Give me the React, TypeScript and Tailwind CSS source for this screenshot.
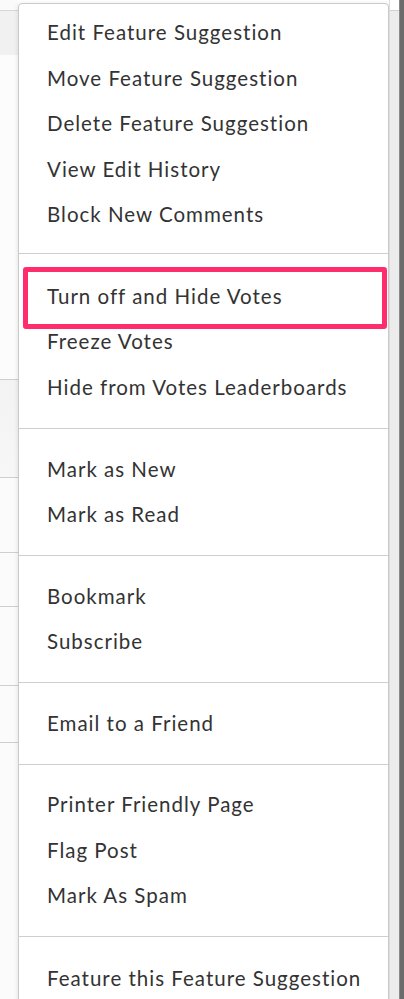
import React from "react";

const groups: string[][] = [
  ["Edit Feature Suggestion", "Move Feature Suggestion", "Delete Feature Suggestion", "View Edit History", "Block New Comments"],
  ["Turn off and Hide Votes", "Freeze Votes", "Hide from Votes Leaderboards"],
  ["Mark as New", "Mark as Read"],
  ["Bookmark", "Subscribe"],
  ["Email to a Friend"],
  ["Printer Friendly Page", "Flag Post", "Mark As Spam"],
  ["Feature this Feature Suggestion"],
];

const groupClass = (gi: number) => {
  if (gi === 0) return "pt-[5.5px] pb-[16px]";
  if (gi === 1) return "border-t border-[#cfcfcf] pt-[19px] pb-[18.5px]";
  if (gi === 6) return "border-t border-[#cfcfcf] pt-[18.5px] pb-[18.5px]";
  return "border-t border-[#cfcfcf] pt-[17px] pb-[18px]";
};

export default function App() {
  return (
    <div className="flex h-[999px] w-[404px] overflow-hidden bg-white" style={{ fontFamily: "Lato, 'Open Sans', sans-serif" }}>
      {/* left background strip */}
      <div className="flex w-[18px] shrink-0 flex-col">
        <div className="h-[10px] bg-[#fafafa]" />
        <div className="h-[45px] border-t border-[#d6d6d6] bg-[#f1f1f1]" />
        <div className="h-[324px] bg-[#fcfcfc]" />
        <div className="h-[98px] border-t border-[#cfcfcf] bg-gradient-to-b from-[#f3f3f3] to-[#f7f7f7]" />
        <div className="h-[75px] border-t border-[#cfcfcf] bg-[#fbfbfb]" />
        <div className="h-[54px] border-t border-[#cfcfcf] bg-[#fbfbfb]" />
        <div className="h-[79px] border-t border-[#cfcfcf] bg-[#fbfbfb]" />
        <div className="h-[57px] border-t border-[#cfcfcf] bg-[#fbfbfb]" />
        <div className="flex-1 border-t border-[#cfcfcf] bg-[#fbfbfb]" />
      </div>

      {/* menu */}
      <div className="mt-[3px] w-[371px] shrink-0 self-start rounded-t-[4px] border border-[#cacaca] bg-white text-[20.5px] tracking-[1px] text-[#333333] shadow-[0_1px_5px_rgba(0,0,0,0.12)]">
        {groups.map((g, gi) => (
          <div key={gi} className={groupClass(gi)}>
            {g.map((item) => (
              <div key={item} className="relative flex h-[45.5px] items-center pl-[28px] leading-none">
                <span>{item}</span>
                {item === "Turn off and Hide Votes" && (
                  <div className="absolute left-[4px] right-[1px] top-[-6px] h-[62px] rounded-[3px] border-[5px] border-[#ff2d6b]" />
                )}
              </div>
            ))}
          </div>
        ))}
      </div>

      {/* right strip */}
      <div className="flex w-[10px] shrink-0 flex-col border-l border-[#dcdcdc]">
        <div className="h-[10px] bg-white" />
        <div className="flex-1 border-t border-[#d0d0d0] bg-[#ececec]" />
      </div>
      <div className="w-[5px] shrink-0 border-l border-[#8a8a8a] bg-[#6b6b6b]" />
    </div>
  );
}
